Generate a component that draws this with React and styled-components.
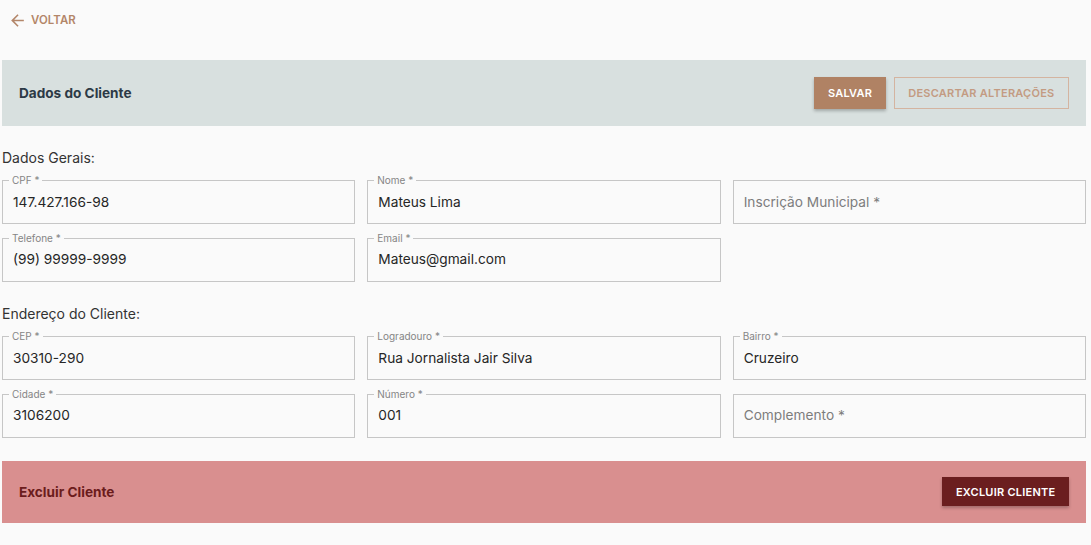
import styled, { createGlobalStyle } from 'styled-components'

const GlobalStyle = createGlobalStyle`
  body {
    margin: 0;
    background: #fafafa;
    font-family: Inter, "Noto Sans", sans-serif;
    color: #2b2b2b;
  }
`

const Page = styled.div`
  padding: 0 5px 24px 2px;
`

const BackLink = styled.a`
  height: 40px;
  display: flex;
  align-items: center;
  gap: 4px;
  padding-left: 6px;
  color: #b38669;
  font-size: 11.4px;
  font-weight: 600;
  letter-spacing: 0.1px;
  text-transform: uppercase;
  cursor: pointer;
  margin-bottom: 20px;
  svg {
    display: block;
  }
`

const Panel = styled.div`
  height: ${p => p.$h}px;
  padding: 0 17px;
  display: flex;
  align-items: center;
  justify-content: space-between;
  background: ${p => (p.$danger ? '#d98f8f' : '#d8e0df')};
  margin-top: ${p => p.$mt || 0}px;
`

const PanelTitle = styled.h2`
  margin: 0;
  font-size: 13.6px;
  font-weight: 700;
  color: ${p => (p.$danger ? '#6b1c1c' : '#2c3a46')};
`

const Actions = styled.div`
  display: flex;
  gap: 8px;
`

const Button = styled.button`
  height: ${p => p.$h || 32}px;
  padding: 0 ${p => p.$px || 13.5}px;
  font-family: inherit;
  font-size: 11px;
  font-weight: 600;
  letter-spacing: 0.25px;
  text-transform: uppercase;
  cursor: pointer;
  border-radius: 0;
  ${p =>
    p.$variant === 'outline'
      ? `
    background: transparent;
    color: #c39b82;
    border: 1px solid #d4b4a0;
    padding: 0 13.5px;
  `
      : p.$variant === 'danger'
      ? `
    background: #6b1e1f;
    color: #fff;
    border: none;
    box-shadow: 0 2px 3px rgba(0, 0, 0, 0.25);
  `
      : `
    background: #b08264;
    color: #fff;
    border: none;
    box-shadow: 0 2px 3px rgba(0, 0, 0, 0.25);
  `}
`

const Section = styled.section`
  padding-top: ${p => p.$pt || 22}px;
`

const SectionTitle = styled.h3`
  margin: 0 0 12px;
  font-size: 14px;
  line-height: 20px;
  font-weight: 400;
  color: #333;
`

const Grid = styled.div`
  display: grid;
  grid-template-columns: repeat(3, 1fr);
  grid-auto-rows: 44px;
  gap: 13.5px 12px;
`

const Field = styled.div`
  position: relative;
  border: 1px solid #c6c6c6;
  display: flex;
  align-items: center;
  padding: 0 10px;
  padding-bottom: 1px;
`

const FieldLabel = styled.span`
  position: absolute;
  top: -7px;
  left: 6px;
  padding: 0 3px;
  background: #fafafa;
  font-size: 10px;
  line-height: 12px;
  color: #858585;
`

const Value = styled.span`
  font-size: 13.7px;
  color: ${p => (p.$placeholder ? '#7d7d7d' : '#262626')};
`

function Input({ label, value }) {
  if (!value) {
    return (
      <Field>
        <Value $placeholder>{label} *</Value>
      </Field>
    )
  }
  return (
    <Field>
      <FieldLabel>{label} *</FieldLabel>
      <Value>{value}</Value>
    </Field>
  )
}

const ArrowBack = () => (
  <svg width="19" height="19" viewBox="0 0 24 24" fill="currentColor">
    <path d="M20 11H7.83l5.59-5.59L12 4l-8 8 8 8 1.41-1.41L7.83 13H20v-2z" />
  </svg>
)

export default function App() {
  return (
    <>
      <GlobalStyle />
      <Page>
        <BackLink>
          <ArrowBack />
          Voltar
        </BackLink>

        <Panel $h={66}>
          <PanelTitle>Dados do Cliente</PanelTitle>
          <Actions>
            <Button>Salvar</Button>
            <Button $variant="outline">Descartar Alterações</Button>
          </Actions>
        </Panel>

        <Section>
          <SectionTitle>Dados Gerais:</SectionTitle>
          <Grid>
            <Input label="CPF" value="147.427.166-98" />
            <Input label="Nome" value="Mateus Lima" />
            <Input label="Inscrição Municipal" />
            <Input label="Telefone" value="(99) 99999-9999" />
            <Input label="Email" value="Mateus@gmail.com" />
          </Grid>
        </Section>

        <Section $pt={22.5}>
          <SectionTitle>Endereço do Cliente:</SectionTitle>
          <Grid>
            <Input label="CEP" value="30310-290" />
            <Input label="Logradouro" value="Rua Jornalista Jair Silva" />
            <Input label="Bairro" value="Cruzeiro" />
            <Input label="Cidade" value="3106200" />
            <Input label="Número" value="001" />
            <Input label="Complemento" />
          </Grid>
        </Section>

        <Panel $h={62} $danger $mt={23}>
          <PanelTitle $danger>Excluir Cliente</PanelTitle>
          <Button $variant="danger" $h={29}>Excluir Cliente</Button>
        </Panel>
      </Page>
    </>
  )
}
